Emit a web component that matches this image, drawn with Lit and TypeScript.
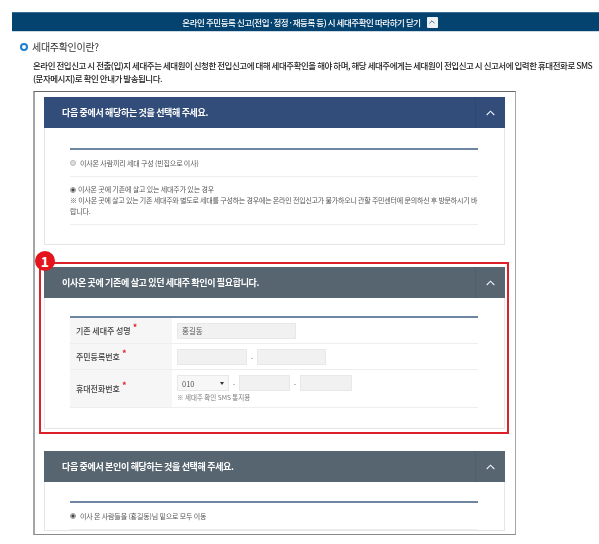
import { LitElement, html, css } from "lit";
import { customElement } from "lit/decorators.js";

const chevron = html`<svg class="chev" width="9" height="6" viewBox="0 0 9 6"><path d="M0.7 5 L4.5 1.2 L8.3 5" fill="none" stroke="currentColor" stroke-width="1.1"/></svg>`;

@customElement("app-root")
export class AppRoot extends LitElement {
  static styles = css`
    :host { display: block; width: 599px; height: 544px; overflow: hidden; background: #fff;
      font-family: "Noto Sans CJK KR", "Noto Sans", sans-serif; color: #333; }
    .page { padding-top: 12px; }
    .topbar { margin-left: 12px; height: 20px; background: #04426f; color: #fff; display: flex; align-items: center; justify-content: center; gap: 6px; padding-left: 9px; font-size: 8.5px; font-weight: 500; letter-spacing: -0.44px; border-top: 1px solid #3a6d92; border-bottom: 1px solid #c9d8e3; box-sizing: border-box; white-space: nowrap; }
    .topbar > span:first-child { filter: blur(0.25px); }
    .topbtn { width: 11px; height: 11px; background: #eef2f6; border-radius: 1px; color: #04426f; display: flex; align-items: center; justify-content: center; }
    .topbtn svg { width: 6px; height: 4px; }
    .intro { padding: 8px 0 0 20px; filter: blur(0.25px); }
    .q { display: flex; align-items: center; gap: 4px; font-size: 10px; letter-spacing: -0.3px; line-height: 14px; color: #333; }
    .dot { width: 8px; height: 8px; border-radius: 50%; border: 2.5px solid #1d7fd0; box-sizing: border-box; }
    .desc { margin: 5px 0 0 13px; width: 564px; font-size: 8.5px; line-height: 13px; letter-spacing: -0.47px; color: #222; font-weight: 500; }
    .frame { position: relative; margin: 6px 0 0 33px; width: 483px; height: 444px; box-sizing: border-box; border: 1px solid #8a8a8a; border-top-color: #666; border-left: 2px solid #a5a5a5; border-right-color: #a5a5a5; padding: 5px 10px 0 9px; background: #fff; }
    .clip { height: 438px; overflow: hidden; filter: blur(0.45px); }
    .panel { border: 1px solid #e6e6e6; border-top: 0; margin-bottom: 22px; background: #fff; }
    .head { margin: 0 -1px; height: 31px; display: flex; align-items: center; justify-content: space-between; padding-left: 18px; color: #fff; font-size: 9px; font-weight: 700; letter-spacing: -0.34px; }
    .navy { background: #324d7a; }
    .slate { background: #566570; }
    .arrowbox { width: 30px; height: 100%; box-sizing: border-box; display: flex; align-items: center; justify-content: center; border-left: 1px solid rgba(0,0,0,.06); color: #eef2f6; }
    .body { padding: 21px 26px 0 25px; height: 95px; }
    .rule { border-top: 2px solid #6f86a3; margin-top: -1px; }
    .row { border-bottom: 1px solid #eee; font-size: 7px; letter-spacing: -0.14px; color: #555; line-height: 11px; box-sizing: border-box; }
    .row1 { height: 27px; display: flex; align-items: center; gap: 2px; }
    .row2 { padding: 7px 0 0; height: 48px; }
    .radio { display: inline-block; width: 6px; height: 6px; border-radius: 50%; border: 1px solid #bbb; background: #ddd; box-sizing: border-box; margin-right: 2px; vertical-align: -0.5px; }
    .radio.on { background: radial-gradient(circle, #444 0 1.4px, #eee 1.8px); border-color: #999; }
    .note { letter-spacing: -0.2px; white-space: normal; }
    .body2 { padding: 19px 26px 0 25px; height: 111px; }
    .tr { display: flex; border-bottom: 1px solid #eee; box-sizing: border-box; }
    .th { width: 102px; flex: none; box-sizing: border-box; background: #f6f6f6; padding-left: 6px; display: flex; align-items: center; font-size: 8px; font-weight: 500; color: #444; letter-spacing: -0.05px; }
    .th sup { color: #e01c22; font-size: 9px; line-height: 0; margin-left: 2px; position: relative; top: -3px; font-weight: 700; }
    .td { padding: 0 5px; display: flex; align-items: center; gap: 3px; font-size: 7px; color: #777; }
    .r1, .r2 { height: 26px; }
    .r3 { height: 38px; }
    .in { height: 16px; background: #f1f1f1; border: 1px solid #e8e8e8; box-sizing: border-box; display: flex; align-items: center; padding-left: 4px; font-size: 7.5px; color: #555; }
    .dash { width: 4px; text-align: center; }
    .select { justify-content: space-between; padding-right: 4px; background: #f7f7f7; }
    .select i { border: 2px solid transparent; border-top: 3px solid #333; border-bottom: 0; }
    .col { flex-direction: column; align-items: flex-start; gap: 2px; padding-top: 5px; }
    .line { display: flex; align-items: center; gap: 3px; }
    .sms { font-size: 6.5px; color: #777; line-height: 9px; }
    .body3 { padding: 20px 26px 0 25px; }
    .red { position: absolute; left: 4px; top: 170px; width: 470px; height: 172px; box-sizing: border-box; border: 2px solid #dc2228; pointer-events: none; }
    .badge { position: absolute; left: 0; top: 159px; width: 20px; height: 20px; border-radius: 50%; background: #e3141b; color: #fff; font-size: 14px; font-weight: 700; display: flex; align-items: center; justify-content: center; line-height: 1; }
  `;

  render() {
    return html`<div class="page">
      <div class="topbar">
        <span>온라인 주민등록 신고(전입·정정·재등록 등) 시 세대주확인 따라하기 닫기</span>
        <span class="topbtn">${chevron}</span>
      </div>
      <div class="intro">
        <div class="q"><span class="dot"></span><span>세대주확인이란?</span></div>
        <div class="desc">온라인 전입신고 시 전출(입)지 세대주는 세대원이 신청한 전입신고에 대해 세대주확인을 해야 하며, 해당 세대주에게는 세대원이 전입신고 시 신고서에 입력한 휴대전화로 SMS (문자메시지)로 확인 안내가 발송됩니다.</div>
      </div>
      <div class="frame">
        <div class="clip">
          <div class="panel">
            <div class="head navy"><span>다음 중에서 해당하는 것을 선택해 주세요.</span><span class="arrowbox">${chevron}</span></div>
            <div class="body">
              <div class="rule"></div>
              <div class="row row1"><span class="radio"></span>이사온 사람끼리 세대 구성 (빈집으로 이사)</div>
              <div class="row row2">
                <div><span class="radio on"></span>이사온 곳에 기존에 살고 있는 세대주가 있는 경우</div>
                <div class="note">※ 이사온 곳에 살고 있는 기존 세대주와 별도로 세대를 구성하는 경우에는 온라인 전입신고가 불가하오니 관할 주민센터에 문의하신 후 방문하시기 바랍니다.</div>
              </div>
            </div>
          </div>
          <div class="panel">
            <div class="head slate"><span>이사온 곳에 기존에 살고 있던 세대주 확인이 필요합니다.</span><span class="arrowbox">${chevron}</span></div>
            <div class="body2">
              <div class="rule"></div>
              <div class="tr r1"><div class="th">기존 세대주 성명<sup>*</sup></div><div class="td"><div class="in" style="width:119px">홍길동</div></div></div>
              <div class="tr r2"><div class="th">주민등록번호<sup>*</sup></div><div class="td"><div class="in" style="width:70px"></div><span class="dash">-</span><div class="in" style="width:69px"></div></div></div>
              <div class="tr r3"><div class="th">휴대전화번호<sup>*</sup></div><div class="td col">
                <div class="line"><div class="in select" style="width:52px">010<i></i></div><span class="dash">-</span><div class="in" style="width:51px"></div><span class="dash">-</span><div class="in" style="width:52px"></div></div>
                <div class="sms">※ 세대주 확인 SMS 통지용</div>
              </div></div>
            </div>
          </div>
          <div class="panel">
            <div class="head slate"><span>다음 중에서 본인이 해당하는 것을 선택해 주세요.</span><span class="arrowbox">${chevron}</span></div>
            <div class="body3">
              <div class="rule"></div>
              <div class="row row1"><span class="radio on"></span>이사 온 사람들을 (홍길동)님 밑으로 모두 이동</div>
            </div>
          </div>
        </div>
        <div class="red"></div>
        <div class="badge">1</div>
      </div>
    </div>`;
  }
}
